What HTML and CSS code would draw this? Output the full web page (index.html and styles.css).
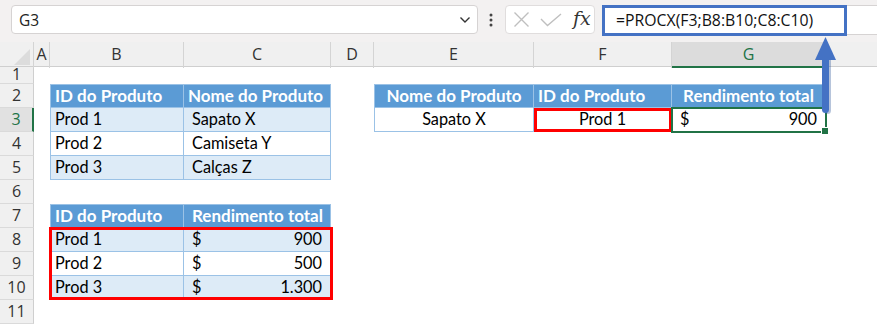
FILE: index.html
```html
<!DOCTYPE html>
<html lang="pt">
<head>
    <meta charset="UTF-8">
    <title>PROCX</title>
    <link rel="stylesheet" href="styles.css">
</head>
<body>
    <div class="topbar">
        <div class="namebox">
            <span>G3</span>
            <svg class="chevron" width="12" height="8" viewBox="0 0 12 8"><path d="M1.5 1.5 L6 6 L10.5 1.5" fill="none" stroke="#333" stroke-width="1.4"/></svg>
        </div>
        <svg class="dots" width="4" height="14" viewBox="0 0 4 14"><circle cx="2" cy="2" r="1.5" fill="#444"/><circle cx="2" cy="7" r="1.5" fill="#444"/><circle cx="2" cy="12" r="1.5" fill="#444"/></svg>
        <div class="fxbox">
            <svg width="17" height="17" viewBox="0 0 17 17"><path d="M1.5 1.5 L15.5 15.5 M15.5 1.5 L1.5 15.5" stroke="#bfbfbf" stroke-width="1.4"/></svg>
            <svg width="22" height="14" viewBox="0 0 22 14"><path d="M1 6 L7.5 12.5 L21 1" fill="none" stroke="#bfbfbf" stroke-width="1.4"/></svg>
            <span class="fx">fx</span>
        </div>
        <div class="formula">
            <div class="formula-hl">=PROCX(F3;B8:B10;C8:C10)</div>
        </div>
    </div>

    <div class="sheet">
        <div class="row colhead">
            <div class="corner"></div>
            <div class="ch">A</div><div class="ch">B</div><div class="ch">C</div><div class="ch">D</div>
            <div class="ch">E</div><div class="ch">F</div><div class="ch sel">G</div><div class="ch last"></div>
        </div>

        <div class="row r1">
            <div class="rh">1</div>
            <div></div><div></div><div></div><div></div><div></div><div></div><div></div><div></div>
        </div>

        <div class="row">
            <div class="rh">2</div>
            <div></div>
            <div class="th first">ID do Produto</div>
            <div class="th">Nome do Produto</div>
            <div></div>
            <div class="th first center">Nome do Produto</div>
            <div class="th">ID do Produto</div>
            <div class="th center">Rendimento total</div>
            <div></div>
        </div>

        <div class="row">
            <div class="rh sel">3</div>
            <div></div>
            <div class="td first alt">Prod 1</div>
            <div class="td alt ind">Sapato X</div>
            <div></div>
            <div class="td first center">Sapato X</div>
            <div class="td center lookup">Prod 1</div>
            <div class="td money active"><span>$</span><span>900</span></div>
            <div></div>
        </div>

        <div class="row">
            <div class="rh">4</div>
            <div></div>
            <div class="td first">Prod 2</div>
            <div class="td ind">Camiseta Y</div>
            <div></div><div></div><div></div><div></div><div></div>
        </div>

        <div class="row">
            <div class="rh">5</div>
            <div></div>
            <div class="td first alt">Prod 3</div>
            <div class="td alt ind">Calças Z</div>
            <div></div><div></div><div></div><div></div><div></div>
        </div>

        <div class="row">
            <div class="rh">6</div>
            <div></div><div></div><div></div><div></div><div></div><div></div><div></div><div></div>
        </div>

        <div class="row">
            <div class="rh">7</div>
            <div></div>
            <div class="th first">ID do Produto</div>
            <div class="th ind">Rendimento total</div>
            <div></div><div></div><div></div><div></div><div></div>
        </div>

        <div class="row">
            <div class="rh">8</div>
            <div></div>
            <div class="td first alt">Prod 1</div>
            <div class="td alt money"><span>$</span><span>900</span></div>
            <div></div><div></div><div></div><div></div><div></div>
        </div>

        <div class="row">
            <div class="rh">9</div>
            <div></div>
            <div class="td first">Prod 2</div>
            <div class="td money"><span>$</span><span>500</span></div>
            <div></div><div></div><div></div><div></div><div></div>
        </div>

        <div class="row">
            <div class="rh">10</div>
            <div></div>
            <div class="td first alt">Prod 3</div>
            <div class="td alt money"><span>$</span><span>1.300</span></div>
            <div></div><div></div><div></div><div></div><div></div>
        </div>

        <div class="row">
            <div class="rh">11</div>
            <div></div><div></div><div></div><div></div><div></div><div></div><div></div><div></div>
        </div>

        <!-- annotation boxes -->
        <div class="range-box"></div>
    </div>

    <svg class="arrow" width="877" height="324" viewBox="0 0 877 324">
        <rect x="824" y="56" width="7" height="58" rx="3.5" fill="#2f5597" opacity="0.35"/>
        <rect x="822" y="55" width="7" height="58" rx="3.5" fill="#4472c4"/>
        <polygon points="825.5,37 836,60 815,60" fill="#4472c4"/>
    </svg>
</body>
</html>
```

FILE: styles.css
```css
* {
    margin: 0;
    padding: 0;
    box-sizing: border-box;
}

body {
    width: 877px;
    height: 324px;
    overflow: hidden;
    background: #fff;
    font-family: Lato, "Noto Sans", sans-serif;
    color: #000;
    position: relative;
}

/* Formula bar */
.topbar {
    height: 42px;
    background: #f3f1f1;
    display: flex;
    align-items: center;
    padding-left: 11px;
    padding-bottom: 3px;
}

.namebox {
    width: 467px;
    height: 29px;
    background: #fff;
    border: 1px solid #d6d3d3;
    border-radius: 4px;
    display: flex;
    align-items: center;
    justify-content: space-between;
    padding: 0 6px 0 7px;
    font-family: "Open Sans", sans-serif;
    font-size: 15.5px;
    color: #222;
}

.dots {
    margin-left: 11px;
}

.fxbox {
    width: 90px;
    height: 29px;
    margin-left: 12px;
    background: #fff;
    border: 1px solid #e0dddd;
    border-radius: 4px;
    display: flex;
    align-items: center;
    gap: 10px;
    padding-left: 7px;
}

.fx {
    font-family: "DejaVu Serif", serif;
    font-style: italic;
    font-size: 19px;
    color: #333;
    margin-left: 1px;
    margin-top: -3px;
}

.formula {
    flex: 1;
    height: 30px;
    margin-left: 7px;
    background: #fff;
    border: 1px solid #d6d3d3;
    border-right: none;
}

.formula-hl {
    width: 245px;
    height: 31px;
    margin: -1px 0 0 -1px;
    border: 3px solid #4472c4;
    padding-left: 11px;
    font-family: "Open Sans", sans-serif;
    font-size: 15.8px;
    line-height: 25px;
    color: #111;
}

/* Sheet grid */
.sheet {
    position: relative;
}

.row {
    display: grid;
    grid-template-columns: 34px 16px 134px 147px 43px 160px 138px 154px 1fr;
    height: 24px;
}

.row.r1 {
    height: 17px;
}

.colhead {
    height: 25px;
    background: #f0f0f0;
    border-bottom: 1px solid #cfcfcf;
}

.corner {
    position: relative;
    border-right: 1px solid #d4d4d4;
}

.corner::after {
    content: "";
    position: absolute;
    right: 3px;
    bottom: 3px;
    border-style: solid;
    border-width: 0 0 16px 16px;
    border-color: transparent transparent #dcdcdc transparent;
}

.ch {
    border-right: 1px solid #d4d4d4;
    font-family: "Open Sans", sans-serif;
    font-size: 16px;
    color: #333;
    text-align: center;
    line-height: 24px;
}

.ch.last {
    border-right: none;
}

.ch.sel {
    background: #dcdcdc;
    color: #217346;
    border-bottom: 2px solid #217346;
}

.rh {
    background: #f0f0f0;
    border-right: 1px solid #cfcfcf;
    border-bottom: 1px solid #dadada;
    font-family: "Open Sans", sans-serif;
    font-size: 16px;
    color: #333;
    text-align: center;
    line-height: 23px;
}

.r1 .rh {
    line-height: 14px;
}

.rh.sel {
    background: #e1e1e1;
    color: #217346;
    border-right: 2px solid #217346;
}

/* Tables */
.th,
.td {
    border-right: 1px solid #9bc2e6;
    border-bottom: 1px solid #9bc2e6;
    font-size: 16.3px;
    line-height: 22px;
    padding: 0 4px;
    white-space: nowrap;
}

.th {
    background: #5b9bd5;
    color: #fff;
    font-weight: bold;
    font-size: 17px;
    border-top: 1px solid #9bc2e6;
    line-height: 21px;
}

.first {
    border-left: 1px solid #9bc2e6;
}

.alt {
    background: #ddebf7;
}

.ind {
    padding-left: 8px;
}

.center {
    text-align: center;
}

.money {
    display: flex;
    justify-content: space-between;
    padding: 0 8px 0 8px;
}

.lookup {
    outline: 3px solid #ff0000;
    outline-offset: -3px;
}

.active {
    position: relative;
    outline: 2px solid #217346;
    outline-offset: -1px;
}

.active::after {
    content: "";
    position: absolute;
    right: -4px;
    bottom: -4px;
    width: 6px;
    height: 6px;
    background: #217346;
    border: 1px solid #fff;
}

.range-box {
    position: absolute;
    left: 49px;
    top: 185px;
    width: 284px;
    height: 73px;
    border: 3px solid #ff0000;
    pointer-events: none;
}

.arrow {
    position: absolute;
    left: 0;
    top: 0;
    pointer-events: none;
}
```
